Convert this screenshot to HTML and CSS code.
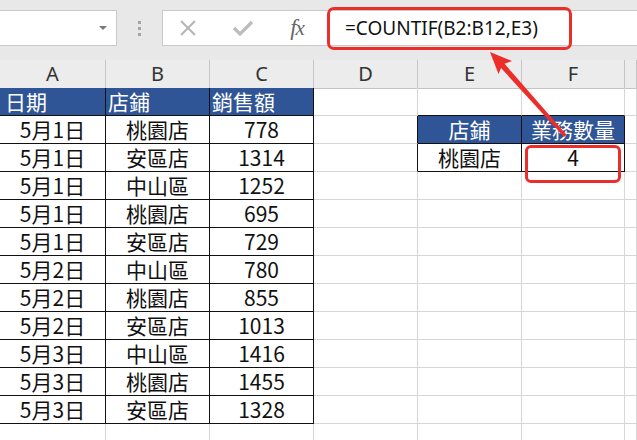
FILE: index.html
```html
<!DOCTYPE html>
<html lang="zh-Hant">
<head>
    <meta charset="UTF-8">
    <title>COUNTIF</title>
    <link rel="stylesheet" href="styles.css">
</head>
<body>
    <div class="sheet">
        <div class="toolbar">
            <div class="namebox"><span class="caret"></span></div>
            <div class="grip"><i></i><i></i><i></i></div>
            <div class="formula-bar">
                <span class="fbtn fbtn-x">
                    <svg width="18" height="18" viewBox="0 0 18 18"><path d="M2 2 L16 16 M16 2 L2 16" stroke="#b4b4b4" stroke-width="2" fill="none"/></svg>
                </span>
                <span class="fbtn fbtn-ok">
                    <svg width="22" height="18" viewBox="0 0 22 18"><path d="M2 9 L8 15 L20 3" stroke="#bcbcbc" stroke-width="3.2" fill="none"/></svg>
                </span>
                <span class="fbtn fx"><i>f</i><i>x</i></span>
                <span class="formula">=COUNTIF(B2:B12,E3)</span>
            </div>
        </div>

        <div class="grid">
            <div class="col">A</div><div class="col">B</div><div class="col">C</div><div class="col">D</div><div class="col">E</div><div class="col">F</div><div class="col"></div>

            <div class="c t th first">日期</div><div class="c t th">店鋪</div><div class="c t th">銷售額</div><div class="c"></div><div class="c bb"></div><div class="c bb"></div><div class="c"></div>

            <div class="c t">5月1日</div><div class="c t">桃園店</div><div class="c t">778</div><div class="c br"></div><div class="c t th mid">店鋪</div><div class="c t th mid">業務數量</div><div class="c"></div>
            <div class="c t">5月1日</div><div class="c t">安區店</div><div class="c t">1314</div><div class="c br"></div><div class="c t">桃園店</div><div class="c t">4</div><div class="c"></div>
            <div class="c t">5月1日</div><div class="c t">中山區</div><div class="c t">1252</div><div class="c"></div><div class="c"></div><div class="c"></div><div class="c"></div>
            <div class="c t">5月1日</div><div class="c t">桃園店</div><div class="c t">695</div><div class="c"></div><div class="c"></div><div class="c"></div><div class="c"></div>
            <div class="c t">5月1日</div><div class="c t">安區店</div><div class="c t">729</div><div class="c"></div><div class="c"></div><div class="c"></div><div class="c"></div>
            <div class="c t">5月2日</div><div class="c t">中山區</div><div class="c t">780</div><div class="c"></div><div class="c"></div><div class="c"></div><div class="c"></div>
            <div class="c t">5月2日</div><div class="c t">桃園店</div><div class="c t">855</div><div class="c"></div><div class="c"></div><div class="c"></div><div class="c"></div>
            <div class="c t">5月2日</div><div class="c t">安區店</div><div class="c t">1013</div><div class="c"></div><div class="c"></div><div class="c"></div><div class="c"></div>
            <div class="c t">5月3日</div><div class="c t">中山區</div><div class="c t">1416</div><div class="c"></div><div class="c"></div><div class="c"></div><div class="c"></div>
            <div class="c t">5月3日</div><div class="c t">桃園店</div><div class="c t">1455</div><div class="c"></div><div class="c"></div><div class="c"></div><div class="c"></div>
            <div class="c t">5月3日</div><div class="c t">安區店</div><div class="c t">1328</div><div class="c"></div><div class="c"></div><div class="c"></div><div class="c"></div>

            <div class="c"></div><div class="c"></div><div class="c"></div><div class="c"></div><div class="c"></div><div class="c"></div><div class="c"></div>
        </div>

        <div class="hl hl-formula"></div>
        <div class="hl hl-cell"></div>

        <svg class="arrow" width="637" height="440" viewBox="0 0 637 440">
            <polygon points="503,62 499,65.8 564,137 566.5,134.8" fill="#ec2e2a"/>
            <polygon points="490,52 512,61 502.5,64.5 498.5,74" fill="#ec2e2a"/>
        </svg>
    </div>
</body>
</html>
```

FILE: styles.css
```css
body {
    margin: 0;
    background: #fff;
    font-family: "Noto Sans CJK TC", "Noto Sans", sans-serif;
}

.sheet {
    position: relative;
    width: 637px;
    height: 440px;
    overflow: hidden;
}

/* formula toolbar */
.toolbar {
    height: 60px;
    box-sizing: border-box;
    padding-top: 10px;
    background: #e8e8e8;
    display: flex;
    align-items: flex-start;
}

.namebox {
    width: 118px;
    height: 36px;
    margin-left: -1px;
    box-sizing: border-box;
    background: #fff;
    border: 1px solid #c9c9c9;
    position: relative;
}

.caret {
    position: absolute;
    right: 9px;
    top: 15px;
    border-left: 4px solid transparent;
    border-right: 4px solid transparent;
    border-top: 4px solid #7a7a7a;
}

.grip {
    width: 44px;
    height: 36px;
    display: flex;
    flex-direction: column;
    align-items: center;
    justify-content: center;
    gap: 3px;
}

.grip i {
    width: 3px;
    height: 3px;
    background: #a4a4a4;
}

.formula-bar {
    flex: 1;
    height: 36px;
    margin-left: 1px;
    box-sizing: border-box;
    background: #fff;
    border: 1px solid #c9c9c9;
    border-right: none;
    display: flex;
    align-items: center;
}

.fbtn {
    display: flex;
    justify-content: center;
    align-items: center;
    height: 34px;
}

.fbtn-x { width: 50px; }
.fbtn-ok { width: 60px; }

.fx {
    width: 48px;
    font-family: "Liberation Serif", serif;
    font-size: 21px;
    color: #666;
    font-style: italic;
    letter-spacing: -1px;
}

.fx i:first-child {
    font-size: 23px;
}

.formula {
    margin-left: 24px;
    font-family: "Noto Sans", sans-serif;
    font-size: 19px;
    color: #111;
    white-space: nowrap;
}

/* cells */
.grid {
    display: grid;
    grid-template-columns: 106px 104px 104px 104px 104px 103px 1fr;
    grid-auto-rows: 28px;
}

.col {
    height: 29px;
    box-sizing: border-box;
    background: #ececec;
    border-right: 1px solid #c4c4c4;
    border-bottom: 1px solid #c4c4c4;
    font-family: "Noto Sans", sans-serif;
    font-size: 20px;
    line-height: 28px;
    color: #333;
    text-align: center;
}

.c {
    box-sizing: border-box;
    border-right: 1px solid #d6d6d6;
    border-bottom: 1px solid #d6d6d6;
    font-size: 21px;
    line-height: 27px;
    color: #111;
    text-align: center;
    white-space: nowrap;
}

.t {
    border-right-color: #111;
    border-bottom-color: #111;
}

.th {
    background: #2f5597;
    color: #fff;
    text-align: left;
    padding-left: 2px;
}

.th.first { padding-left: 5px; }

.th.mid {
    text-align: center;
    padding-left: 0;
}

.br { border-right-color: #111; }
.bb { border-bottom-color: #111; }

/* red annotations */
.hl {
    position: absolute;
    box-sizing: border-box;
    border: 3px solid #ec2e2a;
    border-radius: 7px;
}

.hl-formula {
    left: 327px;
    top: 7px;
    width: 245px;
    height: 43px;
}

.hl-cell {
    left: 525px;
    top: 145px;
    width: 96px;
    height: 38px;
    border-radius: 6px;
}

.arrow {
    position: absolute;
    left: 0;
    top: 0;
}
```
